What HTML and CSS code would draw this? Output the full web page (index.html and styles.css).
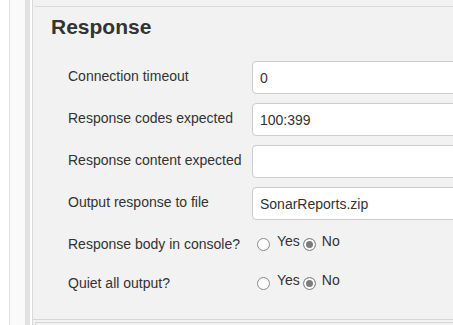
FILE: index.html
```html
<!DOCTYPE html>
<html lang="en">
<head>
    <meta charset="UTF-8">
    <meta name="viewport" content="width=device-width, initial-scale=1.0">
    <title>Response settings</title>
    <link rel="stylesheet" href="styles.css">
</head>
<body>
    <div class="page">
        <div class="gutter"></div>
        <div class="rail"></div>
        <div class="band"></div>
        <div class="main">
            <div class="rule"></div>
            <section class="panel">
                <h2>Response</h2>
                <div class="row">
                    <label for="timeout">Connection timeout</label>
                    <input type="text" class="field" id="timeout" value="0">
                </div>
                <div class="row">
                    <label for="codes">Response codes expected</label>
                    <input type="text" class="field" id="codes" value="100:399">
                </div>
                <div class="row">
                    <label for="content">Response content expected</label>
                    <input type="text" class="field" id="content" value="">
                </div>
                <div class="row">
                    <label for="outfile">Output response to file</label>
                    <input type="text" class="field" id="outfile" value="SonarReports.zip">
                </div>
                <div class="row radio-row">
                    <label>Response body in console?</label>
                    <div class="radios">
                        <input type="radio" name="console" id="console-yes"><span class="opt">Yes</span><input type="radio" name="console" id="console-no" checked><span class="opt opt-no">No</span>
                    </div>
                </div>
                <div class="row radio-row">
                    <label>Quiet all output?</label>
                    <div class="radios">
                        <input type="radio" name="quiet" id="quiet-yes"><span class="opt">Yes</span><input type="radio" name="quiet" id="quiet-no" checked><span class="opt opt-no">No</span>
                    </div>
                </div>
            </section>
            <div class="next"></div>
        </div>
    </div>
</body>
</html>
```

FILE: styles.css
```css
html, body {
    margin: 0;
    padding: 0;
    background-color: #fff;
}
body {
    font-family: "Liberation Sans", Arial, sans-serif;
    font-size: 14px;
    color: #333;
    overflow: hidden;
}
.page {
    display: flex;
    height: 325px;
    overflow: hidden;
}
.gutter {
    width: 9px;
    flex: none;
}
.rail {
    width: 15px;
    flex: none;
    border-left: 1px solid #e4e4e4;
    background-color: #fafafa;
}
.band {
    width: 5px;
    flex: none;
    margin-right: 2px;
    background-color: #e1e1e1;
}
.main {
    flex: 1;
    min-width: 0;
    overflow: hidden;
    border-left: 1px solid #d9d9d9;
    background-color: #f2f2f2;
}
.rule {
    margin: 6px 0 0 2px;
    border-top: 1px solid #dadada;
}
.panel {
    box-sizing: border-box;
    height: 313px;
    padding: 8px 0 0 18px;
    border-bottom: 1px solid #d6d6d6;
}
.panel h2 {
    margin: 0 0 22px;
    font-size: 21px;
    line-height: 24px;
    font-weight: bold;
    color: #333;
}
.row {
    display: flex;
    align-items: center;
    height: 33px;
    margin: 0 0 9px 17px;
}
.row label {
    width: 184px;
    flex: none;
    line-height: 20px;
    margin-bottom: 4px;
}
.field {
    box-sizing: border-box;
    flex: none;
    width: 260px;
    height: 33px;
    margin: 0;
    padding: 0 7px;
    border: 1px solid #cccccc;
    border-radius: 4px;
    background-color: #fff;
    font-family: inherit;
    font-size: 14px;
    color: #333;
}
.radio-row {
    height: 30px;
}
.radio-row label {
    margin-bottom: 0;
}
.radios {
    display: flex;
    align-items: center;
}
.radios input[type="radio"] {
    -webkit-appearance: none;
    appearance: none;
    box-sizing: border-box;
    width: 13px;
    height: 13px;
    margin: 0 0 0 3px;
    border: 1px solid #8a8a8a;
    border-radius: 50%;
    background-color: #fff;
}
.radios input[type="radio"]:first-child {
    margin-left: 5px;
}
.radios input[type="radio"]:checked {
    background-color: #7d7d7d;
    box-shadow: inset 0 0 0 2px #fff;
}
.opt {
    margin: 0 0 6px 7px;
    line-height: 20px;
}
.opt-no {
    margin-left: 6px;
}
.next {
    margin: 2px 0 0 2px;
    height: 10px;
    border-top: 1px solid #d6d6d6;
    border-left: 1px solid #d6d6d6;
}
```
